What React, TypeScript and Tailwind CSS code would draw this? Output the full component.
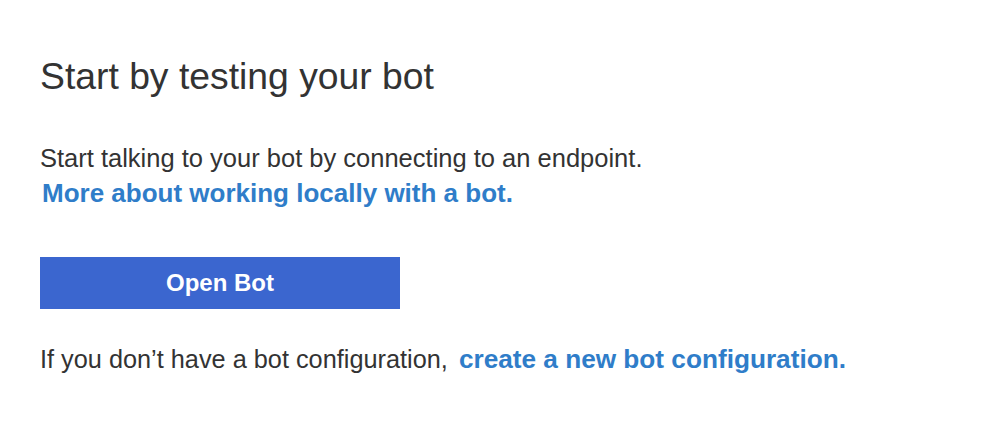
export default function App() {
  return (
    <div className="w-[999px] h-[445px] bg-white text-[#333333]" style={{ fontFamily: '"Liberation Sans", Arial, sans-serif' }}>
      <div className="pl-[40px] pt-[52px]">
        <h1 className="text-[37.3px] leading-[48px] font-normal">Start by testing your bot</h1>
        <p className="mt-[43px] text-[25.5px] leading-[30px]">Start talking to your bot by connecting to an endpoint.</p>
        <a className="block mt-[5px] pl-[2px] text-[26px] leading-[30px] font-bold text-[#2f7dc9]">More about working locally with a bot.</a>
        <button className="block mt-[49px] w-[360px] h-[52px] bg-[#3b66cf] text-white text-[24px] font-bold">Open Bot</button>
        <p className="mt-[35px] text-[25.3px] leading-[30px]">
          If you don’t have a bot configuration,{" "}
          <a className="pl-[4px] text-[26.2px] font-bold text-[#2f7dc9]">create a new bot configuration.</a>
        </p>
      </div>
    </div>
  );
}
